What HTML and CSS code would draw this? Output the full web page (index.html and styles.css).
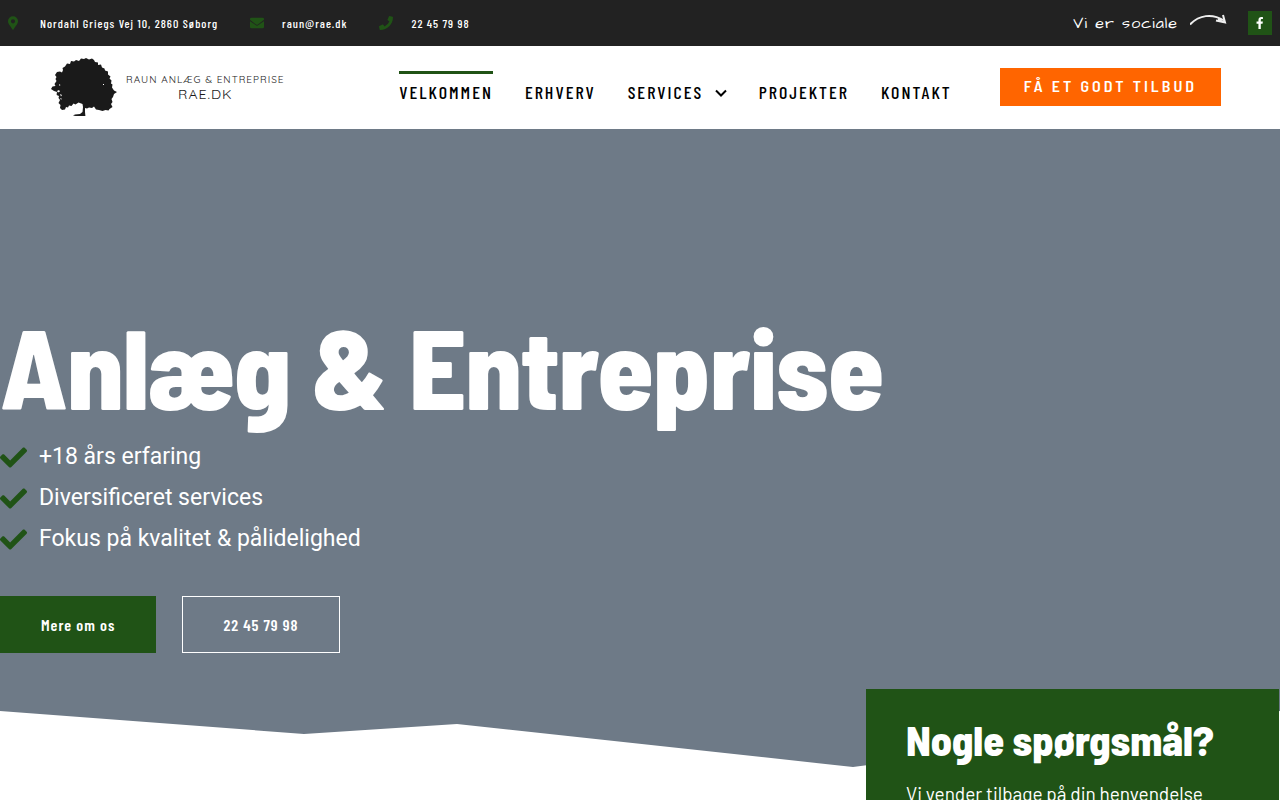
FILE: index.html
```
<!DOCTYPE html>
<html lang="da">
<head>
    <meta charset="UTF-8">
    <meta name="viewport" content="width=device-width, initial-scale=1.0">
    <title>Raun Anlæg &amp; Entreprise</title>
    <link rel="stylesheet" href="styles.css">
</head>
<body>
    <!-- Top bar -->
    <div class="topbar">
        <ul class="contact-list">
            <li>
                <svg class="icon-pin" viewBox="0 0 384 512"><path d="M172 502C27 291 0 270 0 192a192 192 0 1 1 384 0c0 78-27 99-172 310-9 13-31 13-40 0zM192 272a80 80 0 1 0 0-160 80 80 0 0 0 0 160z"/></svg>
                <span>Nordahl Griegs Vej 10, 2860 Søborg</span>
            </li>
            <li>
                <svg class="icon-mail" viewBox="0 0 512 512"><path d="M502 191c4-3 10 0 10 5v204a48 48 0 0 1-48 48H48a48 48 0 0 1-48-48V196c0-5 6-8 10-5 22 17 52 40 155 114 21 15 57 48 91 48s71-33 91-48c103-75 133-97 155-114zM256 320c23 0 57-29 74-41 132-96 142-104 173-129 6-4 9-11 9-18v-20a48 48 0 0 0-48-48H48a48 48 0 0 0-48 48v20c0 7 3 14 9 18 31 24 41 33 173 129 17 12 51 41 74 41z"/></svg>
                <a href="mailto:raun@rae.dk">raun@rae.dk</a>
            </li>
            <li>
                <svg class="icon-phone" viewBox="0 0 512 512"><path d="M493 25 389 1a24 24 0 0 0-27 14l-48 112a24 24 0 0 0 7 28l60 49a371 371 0 0 1-177 177l-49-60a24 24 0 0 0-28-7L15 362a24 24 0 0 0-14 27l24 104a24 24 0 0 0 23 19c256 0 464-207 464-464a24 24 0 0 0-19-23z"/></svg>
                <a href="tel:22457998">22 45 79 98</a>
            </li>
        </ul>
        <div class="social">
            <span class="social-text">Vi er sociale</span>
            <svg class="social-arrow" viewBox="0 0 37 12"><path d="M0 10.500C9 1 22-1 34 6.500"/><path d="M33 1l2 7.500-9-2M32 6l-4-1"/></svg>
            <a href="#" class="facebook" aria-label="Facebook">
                <svg viewBox="0 0 320 512"><path d="m279 288 14-93h-89v-60c0-25 12-50 52-50h41V7s-37-7-72-7c-73 0-121 44-121 125v70H23v93h81v224h100V288z"/></svg>
            </a>
        </div>
    </div>

    <!-- Header -->
    <header class="header">
        <a href="#" class="logo">
            <svg class="logo-tree" viewBox="0 0 66 58"><path d="M22 57.500l2-.9 5-.5 2.500-2 .5-5-.5-3-4-1.500-3 2-2-1-2 2.500-2.500-.5-1 2-2-.5-1 2.500-3 .5-2-2 .5-3-2-2 1.500-3-1.500-2 .5-2-2.500-1 .5-3-3-1L0 31l1.500-2.500 3-.5L3.500 26l2-3-1-2 1-2-1.500-2L6 14l3-.5 2 1 1-2.500-.5-2 2.500-1.500 2-3L19 6l1-3 3 .5L25 2l3 1 2-2.500 3 .5 2-1 3 1.500 3-1 2 1.500 1 2 3 .5v2.500l3-.5 1 3 2.500 1 .5 2 3 1v3l2.500 2-1 2 2 2-.5 3 1.500 1-.5 3 2 3 3 1.500-3 2-1 3-1.500 2 1 3-1.500 2 1.500 3-3 2-1 1.500-3-.5-3 1-3.500-1-3-.5-2-3-2 1.500-3-.5-2 1-2-.5v4l.5 5 2 2.500 6 .3 6 .7z"/><path class="gap" d="M6 33l2-1 1 1.500-2 1zM4 36l2 1-1 1zM9 36l2 1-1 1.500zM8 26l1.500 1-1 1zM9 41l1-1 1 1.500zM52 26h1v1h-1z"/></svg>
            <span class="logo-text">
                <span class="logo-name">RAUN ANLÆG &amp; ENTREPRISE</span>
                <span class="logo-domain">RAE.DK</span>
            </span>
        </a>
        <nav class="nav">
            <a href="#" class="active">VELKOMMEN</a>
            <a href="#">ERHVERV</a>
            <a href="#">SERVICES <svg class="chevron" viewBox="0 0 12 8"><path d="M1 1.500l5 5 5-5"/></svg></a>
            <a href="#">PROJEKTER</a>
            <a href="#">KONTAKT</a>
        </nav>
        <a href="#" class="btn-offer">FÅ ET GODT TILBUD</a>
    </header>

    <!-- Hero -->
    <section class="hero">
        <h1>Anlæg &amp; Entreprise</h1>
        <ul class="check-list">
            <li><svg viewBox="0 0 512 512"><path d="M174 439 7 273c-10-10-10-26 0-36l37-36c10-10 26-10 36 0l112 112L432 73c10-10 26-10 36 0l37 36c10 10 10 26 0 36L210 439c-10 10-26 10-36 0z"/></svg>+18 års erfaring</li>
            <li><svg viewBox="0 0 512 512"><path d="M174 439 7 273c-10-10-10-26 0-36l37-36c10-10 26-10 36 0l112 112L432 73c10-10 26-10 36 0l37 36c10 10 10 26 0 36L210 439c-10 10-26 10-36 0z"/></svg>Diversificeret services</li>
            <li><svg viewBox="0 0 512 512"><path d="M174 439 7 273c-10-10-10-26 0-36l37-36c10-10 26-10 36 0l112 112L432 73c10-10 26-10 36 0l37 36c10 10 10 26 0 36L210 439c-10 10-26 10-36 0z"/></svg>Fokus på kvalitet &amp; pålidelighed</li>
        </ul>
        <div class="hero-buttons">
            <a href="#" class="btn btn-green">Mere om os</a>
            <a href="tel:22457998" class="btn btn-outline">22 45 79 98</a>
        </div>
        <svg class="hero-shape" viewBox="0 0 1280 89" preserveAspectRatio="none"><path d="M0 0l304 23 153-10 396 43 427-56v89H0z"/></svg>
    </section>

    <!-- Contact card -->
    <section class="contact">
        <div class="contact-card">
            <h2>Nogle spørgsmål?</h2>
            <p>Vi vender tilbage på din henvendelse</p>
        </div>
    </section>
</body>
</html>
```
FILE: styles.css
```
* {
    margin: 0;
    padding: 0;
    box-sizing: border-box;
}

body {
    font-family: "Barlow Condensed", "Roboto Condensed", "Liberation Sans Narrow", sans-serif;
    background-color: #fff;
    overflow-x: hidden;
}

a {
    color: inherit;
    text-decoration: none;
}

ul {
    list-style: none;
}

/* Top bar */
.topbar {
    display: flex;
    justify-content: space-between;
    align-items: center;
    height: 46px;
    padding: 0 8px;
    background-color: #222;
    color: #fff;
}

.contact-list {
    display: flex;
    gap: 32px;
    font-size: 12px;
    font-weight: 500;
    letter-spacing: 1px;
}

.contact-list li {
    display: flex;
    align-items: center;
}

.contact-list svg {
    height: 14px;
    fill: #205316;
}

.icon-pin {
    width: 10px;
    margin-right: 22px;
}

.icon-mail,
.icon-phone {
    width: 14px;
    margin-right: 18px;
}

.social {
    display: flex;
    align-items: center;
}

.social-text {
    font-family: "Architects Daughter", Lato, cursive;
    font-size: 16px;
    letter-spacing: 1px;
}

.social-arrow {
    width: 37px;
    height: 12px;
    margin: 0 21px 6px 12px;
    fill: none;
    stroke: #eee;
    stroke-width: 2;
}

.facebook {
    display: flex;
    align-items: center;
    justify-content: center;
    width: 24px;
    height: 24px;
    background-color: #205316;
}

.facebook svg {
    height: 12px;
    fill: #fff;
}

/* Header */
.header {
    display: flex;
    align-items: center;
    height: 83px;
    padding: 0 59px 1px 51px;
    background-color: #fff;
}

.logo {
    display: flex;
    align-items: center;
    gap: 9px;
    color: #1a1a1a;
}

.logo-tree {
    width: 66px;
    height: 58px;
    fill: #1a1a1a;
}

.logo-tree .gap {
    fill: #fff;
}

.logo-text {
    display: flex;
    flex-direction: column;
    align-items: center;
    font-family: Quicksand, Lato, sans-serif;
}

.logo-name {
    font-size: 10px;
    line-height: 13px;
    letter-spacing: 1px;
}

.logo-domain {
    font-size: 14px;
    line-height: 16px;
    letter-spacing: 1px;
}

.nav {
    display: flex;
    gap: 32px;
    margin-left: auto;
    font-size: 18px;
    font-weight: 500;
    letter-spacing: 2px;
    color: #000;
}

.nav a {
    padding-top: 6px;
    border-top: 3px solid transparent;
    line-height: 24px;
}

.nav .active {
    border-color: #205316;
}

.chevron {
    width: 12px;
    height: 8px;
    margin-left: 6px;
    vertical-align: 2px;
    fill: none;
    stroke: #000;
    stroke-width: 2;
}

.btn-offer {
    margin-left: 48px;
    padding: 0 24px 2px;
    background-color: #ff6500;
    color: #fff;
    font-family: "Barlow Semi Condensed", "Barlow Condensed", sans-serif;
    font-size: 16px;
    font-weight: 600;
    letter-spacing: 3px;
    line-height: 36px;
}

/* Hero */
.hero {
    position: relative;
    padding: 168px 0 147px;
    background-color: #6e7a87;
    color: #fff;
}

h1,
h2 {
    font-family: "Barlow Semi Condensed", "Barlow Condensed", sans-serif;
    font-weight: 800;
}

h1 {
    margin-bottom: 6px;
    font-size: 113px;
    letter-spacing: -1px;
    line-height: 136px;
}

.check-list {
    font-family: Roboto, sans-serif;
    font-size: 23px;
    line-height: 36px;
}

.check-list li {
    display: flex;
    align-items: center;
    gap: 12px;
    margin-bottom: 5px;
}

.check-list svg {
    width: 27px;
    height: 27px;
    fill: #205316;
}

.hero-buttons {
    display: flex;
    gap: 26px;
    margin-top: 39px;
}

.btn {
    padding: 0 40px;
    border: 1px solid #205316;
    font-size: 16px;
    font-weight: 600;
    letter-spacing: 1px;
    line-height: 55px;
}

.btn-green {
    background-color: #205316;
}

.btn-outline {
    border-color: #fff;
}

.hero-shape {
    position: absolute;
    left: 0;
    bottom: 0;
    width: 100%;
    height: 89px;
    fill: #fff;
}

/* Contact card */
.contact {
    display: flex;
    justify-content: flex-end;
    margin-top: -111px;
    padding-right: 1px;
}

.contact-card {
    position: relative;
    width: 413px;
    padding: 25px 40px 40px;
    background-color: #205316;
    color: #fff;
}

.contact-card h2 {
    font-size: 42px;
    line-height: 50px;
}

.contact-card p {
    margin-top: 18px;
    font-family: Barlow, Roboto, sans-serif;
    font-size: 19px;
    line-height: 24px;
}
```
